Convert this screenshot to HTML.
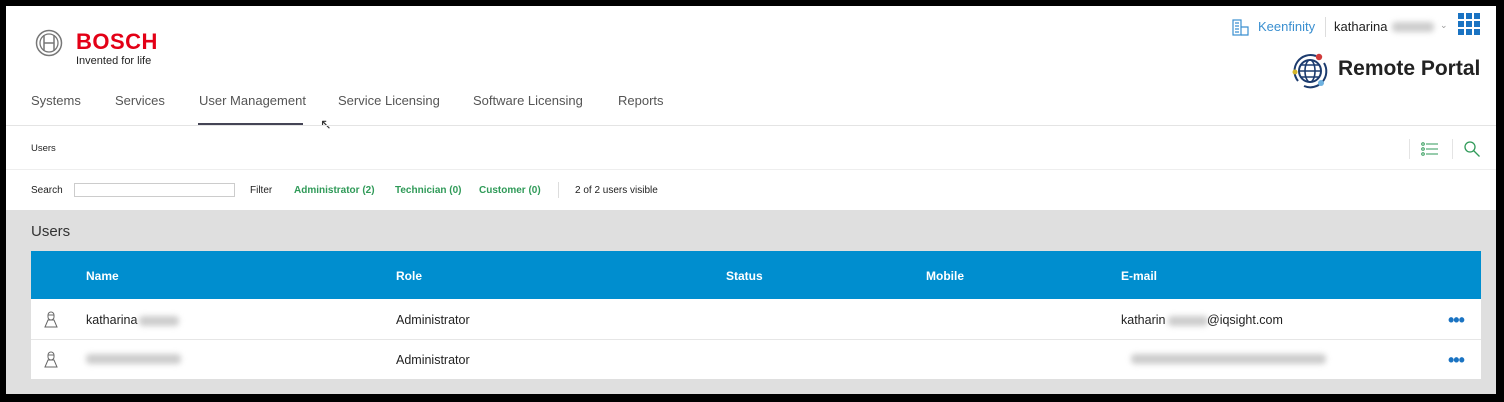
<!DOCTYPE html>
<html><head><style>
*{margin:0;padding:0;box-sizing:border-box}
body{width:1504px;height:402px;background:#000;font-family:"Liberation Sans",sans-serif;position:relative;overflow:hidden}
.a{position:absolute}
#pg{left:6px;top:6px;width:1490px;height:388px;background:#fff;overflow:hidden}
.nav{font-size:13px;color:#555;top:87px}
.blur{background:#ccc;filter:blur(3px);height:10px;border-radius:4px}
.g{color:#2f9a58;font-weight:bold;font-size:10px}
.s{font-size:10px;color:#222}
.th{color:#fff;font-weight:bold;font-size:12px;top:18px}
.td{font-size:12.5px;color:#222}
.dots{color:#1a73c2;font-weight:bold;font-size:18px;line-height:10px;letter-spacing:-1px}
</style></head><body>
<div id="pg" class="a">
<svg class="a" style="left:29px;top:23px" width="30" height="30" viewBox="0 0 30 30"><circle cx="14" cy="14" r="12.5" fill="none" stroke="#777" stroke-width="1.5"/><circle cx="14" cy="14" r="9" fill="none" stroke="#777" stroke-width="1.3"/><path d="M9 6v16M19 6v16M9 14h10" stroke="#777" stroke-width="1.5" fill="none"/></svg>
<div class="a" style="left:70px;top:23px;font-size:22px;font-weight:bold;color:#e30016;letter-spacing:0.5px">BOSCH</div>
<div class="a" style="left:70px;top:49px;font-size:11px;color:#222">Invented for life</div>
<div class="a nav" style="left:25px">Systems</div>
<div class="a nav" style="left:109px">Services</div>
<div class="a nav" style="left:193px">User Management</div>
<div class="a" style="left:192px;top:117px;width:105px;height:2px;background:#445"></div>
<div class="a nav" style="left:332px">Service Licensing</div>
<div class="a nav" style="left:467px">Software Licensing</div>
<div class="a nav" style="left:612px">Reports</div>
<div class="a" style="left:314px;top:110px;font-size:14px;color:#333">&#8598;</div>
<svg class="a" style="left:1226px;top:12px" width="18" height="18" viewBox="0 0 18 18" fill="none" stroke="#3a8fd0" stroke-width="1.2"><rect x="1" y="2" width="8" height="15"/><path d="M9 9h7v8H9M3 5h4M3 8h4M3 11h4M3 14h4"/></svg>
<div class="a" style="left:1252px;top:13px;font-size:13px;color:#3a8fd0">Keenfinity</div>
<div class="a" style="left:1319px;top:11px;width:1px;height:20px;background:#ddd"></div>
<div class="a" style="left:1328px;top:13px;font-size:13px;color:#222">katharina</div>
<div class="a blur" style="left:1386px;top:16px;width:42px"></div>
<div class="a" style="left:1434px;top:14px;font-size:9px;color:#999">&#8964;</div>
<svg class="a" style="left:1452px;top:7px" width="22" height="22" viewBox="0 0 22 22" fill="#1a73c2"><rect x="0" y="0" width="6" height="6"/><rect x="8" y="0" width="6" height="6"/><rect x="16" y="0" width="6" height="6"/><rect x="0" y="8" width="6" height="6"/><rect x="8" y="8" width="6" height="6"/><rect x="16" y="8" width="6" height="6"/><rect x="0" y="16" width="6" height="6"/><rect x="8" y="16" width="6" height="6"/><rect x="16" y="16" width="6" height="6"/></svg>
<svg class="a" style="left:1284px;top:45px" width="40" height="40" viewBox="0 0 40 40"><path d="M8 30A16 16 0 0 1 26 5" fill="none" stroke="#1c3b6e" stroke-width="2"/><path d="M34 12A16 16 0 0 1 14 35" fill="none" stroke="#1c3b6e" stroke-width="2"/><circle cx="20" cy="20" r="11" fill="none" stroke="#1c3b6e" stroke-width="2"/><ellipse cx="20" cy="20" rx="5" ry="11" fill="none" stroke="#1c3b6e" stroke-width="1.6"/><path d="M9 20h22M11 14h18M11 26h18" stroke="#1c3b6e" stroke-width="1.6"/><circle cx="29" cy="6" r="3.2" fill="#d03a3a"/><circle cx="5" cy="21" r="2.5" fill="#d4b52a"/><circle cx="31" cy="32" r="3" fill="#6fb2e0"/></svg>
<div class="a" style="left:1332px;top:51px;font-size:21px;font-weight:bold;color:#222">Remote Portal</div>
<div class="a" style="left:0;top:119px;width:1490px;height:1px;background:#e4e4e4"></div>
<div class="a s" style="left:25px;top:137px;font-size:9.5px">Users</div>
<div class="a" style="left:1403px;top:133px;width:1px;height:20px;background:#e4e4e4"></div>
<div class="a" style="left:1446px;top:133px;width:1px;height:20px;background:#e4e4e4"></div>
<svg class="a" style="left:1415px;top:136px" width="18" height="14" viewBox="0 0 18 14" fill="none" stroke="#2f9a58" stroke-width="1"><circle cx="2" cy="2" r="1.3"/><circle cx="2" cy="7" r="1.3"/><circle cx="2" cy="12" r="1.3"/><path d="M5 2h12M5 7h12M5 12h12"/></svg>
<svg class="a" style="left:1457px;top:134px" width="18" height="18" viewBox="0 0 18 18" fill="none" stroke="#2f9a58" stroke-width="1.3"><circle cx="7" cy="7" r="5"/><path d="M10.5 10.5l6 6"/></svg>
<div class="a" style="left:0;top:163px;width:1490px;height:1px;background:#eee"></div>
<div class="a s" style="left:25px;top:179px">Search</div>
<div class="a" style="left:68px;top:177px;width:161px;height:14px;border:1px solid #ccc"></div>
<div class="a s" style="left:244px;top:179px">Filter</div>
<div class="a g" style="left:288px;top:179px">Administrator (2)</div>
<div class="a g" style="left:389px;top:179px">Technician (0)</div>
<div class="a g" style="left:473px;top:179px">Customer (0)</div>
<div class="a" style="left:552px;top:176px;width:1px;height:16px;background:#ddd"></div>
<div class="a s" style="left:569px;top:179px">2 of 2 users visible</div>
<div class="a" style="left:0;top:204px;width:1490px;height:184px;background:#dfdfdf">
<div class="a" style="left:25px;top:13px;font-size:15px;color:#333">Users</div>
<div class="a" style="left:25px;top:41px;width:1450px;height:128px;background:#fff">
<div class="a" style="left:0;top:0;width:1450px;height:48px;background:#008ecf">
<div class="a th" style="left:55px">Name</div>
<div class="a th" style="left:365px">Role</div>
<div class="a th" style="left:695px">Status</div>
<div class="a th" style="left:895px">Mobile</div>
<div class="a th" style="left:1090px">E-mail</div>
</div>
<div class="a" style="left:0;top:88px;width:1450px;height:1px;background:#e6e6e6"></div>
<svg class="a" style="left:13px;top:59px" width="14" height="18" viewBox="0 0 14 18" fill="none" stroke="#666" stroke-width="1"><path d="M4 5a3 3 0 0 1 6 0v2a3 3 0 0 1-6 0zM4 5h6"/><path d="M1 17l3-7h6l3 7z"/></svg>
<svg class="a" style="left:13px;top:99px" width="14" height="18" viewBox="0 0 14 18" fill="none" stroke="#666" stroke-width="1"><path d="M4 5a3 3 0 0 1 6 0v2a3 3 0 0 1-6 0zM4 5h6"/><path d="M1 17l3-7h6l3 7z"/></svg>
<div class="a td" style="left:55px;top:62px">katharina</div>
<div class="a blur" style="left:108px;top:65px;width:40px"></div>
<div class="a blur" style="left:55px;top:103px;width:95px"></div>
<div class="a td" style="left:365px;top:62px">Administrator</div>
<div class="a td" style="left:365px;top:102px">Administrator</div>
<div class="a td" style="left:1090px;top:62px">katharin</div>
<div class="a blur" style="left:1137px;top:65px;width:40px"></div>
<div class="a td" style="left:1176px;top:62px">@iqsight.com</div>
<div class="a blur" style="left:1100px;top:103px;width:195px"></div>
<div class="a dots" style="left:1417px;top:64px">&bull;&bull;&bull;</div>
<div class="a dots" style="left:1417px;top:104px">&bull;&bull;&bull;</div>
</div>
</div>
</div>
</body></html>
